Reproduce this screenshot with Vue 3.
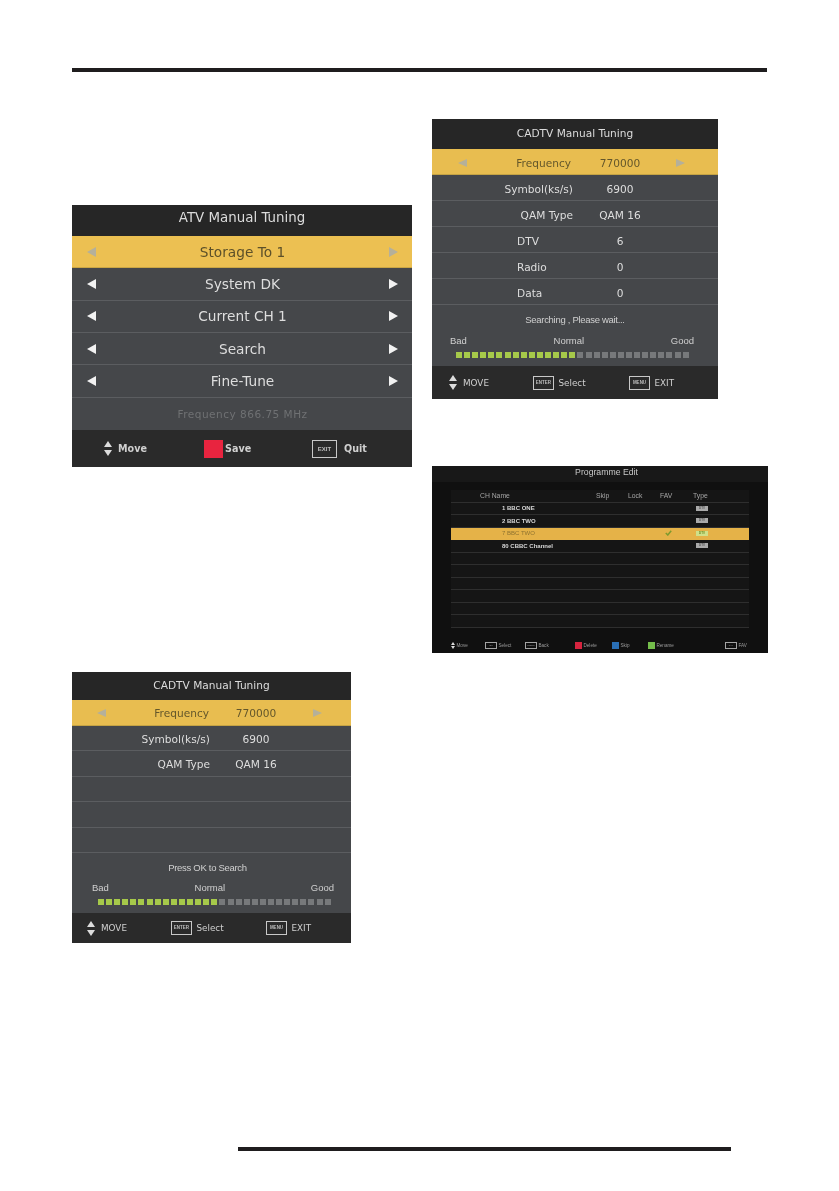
<script setup>
const atvRows = ['System DK', 'Current CH 1', 'Search', 'Fine-Tune']

const tuningPanels = [
  {
    id: 'cad-a',
    message: 'Searching , Please wait...',
    rows: [
      { label: 'Symbol(ks/s)', value: '6900' },
      { label: 'QAM Type', value: 'QAM 16' },
      { label: 'DTV', value: '6', left: true },
      { label: 'Radio', value: '0', left: true },
      { label: 'Data', value: '0', left: true }
    ]
  },
  {
    id: 'cad-b',
    message: 'Press OK to Search',
    rows: [
      { label: 'Symbol(ks/s)', value: '6900' },
      { label: 'QAM Type', value: 'QAM 16' },
      { label: '', value: '' },
      { label: '', value: '' },
      { label: '', value: '' }
    ]
  }
]

const segments = Array.from({ length: 29 }, (_, i) => i < 15)

const channels = [
  { name: '1 BBC ONE' },
  { name: '2 BBC TWO' },
  { name: '7 BBC TWO', active: true },
  { name: '80 CBBC Channel' },
  {}, {}, {}, {}, {}, {}
]
</script>

<template>
  <div class="page">
    <div class="rule-top"></div>

    <div class="columns">
      <div class="col col-left">
        <section class="panel atv">
          <h2 class="title">ATV Manual Tuning</h2>
          <div class="rows">
            <div class="atv-row selected">
              <i class="tri left"></i><span>Storage To 1</span><i class="tri right"></i>
            </div>
            <div v-for="r in atvRows" :key="r" class="atv-row">
              <i class="tri left"></i><span>{{ r }}</span><i class="tri right"></i>
            </div>
            <div class="atv-row dim"><span>Frequency 866.75 MHz</span></div>
          </div>
          <div class="foot">
            <div class="foot-item"><span class="updown"><i></i><i></i></span>Move</div>
            <div class="foot-item"><span class="red-key"></span>Save</div>
            <div class="foot-item"><span class="key">EXIT</span>Quit</div>
          </div>
        </section>

        <section class="panel tuning cad-b">
          <h2 class="title">CADTV Manual Tuning</h2>
          <div class="rows">
            <div class="t-row selected">
              <i class="tri left"></i>
              <span class="t-label">Frequency</span>
              <span class="t-value">770000</span>
              <i class="tri right"></i>
            </div>
            <div v-for="(r, i) in tuningPanels[1].rows" :key="i" class="t-row">
              <i class="tri none"></i>
              <span class="t-label">{{ r.label }}</span>
              <span class="t-value">{{ r.value }}</span>
            </div>
          </div>
          <div class="signal">
            <p class="message">{{ tuningPanels[1].message }}</p>
            <div class="levels"><span>Bad</span><span>Normal</span><span>Good</span></div>
            <div class="bar">
              <i v-for="(on, i) in segments" :key="i" :class="{ on }"></i>
            </div>
          </div>
          <div class="foot">
            <div class="foot-item"><span class="updown"><i></i><i></i></span>MOVE</div>
            <div class="foot-item"><span class="key">ENTER</span>Select</div>
            <div class="foot-item"><span class="key">MENU</span>EXIT</div>
          </div>
        </section>
      </div>

      <div class="col col-right">
        <section class="panel tuning cad-a">
          <h2 class="title">CADTV Manual Tuning</h2>
          <div class="rows">
            <div class="t-row selected">
              <i class="tri left"></i>
              <span class="t-label">Frequency</span>
              <span class="t-value">770000</span>
              <i class="tri right"></i>
            </div>
            <div v-for="(r, i) in tuningPanels[0].rows" :key="i" class="t-row">
              <i class="tri none"></i>
              <span class="t-label" :class="{ 'is-left': r.left }">{{ r.label }}</span>
              <span class="t-value">{{ r.value }}</span>
            </div>
          </div>
          <div class="signal">
            <p class="message">{{ tuningPanels[0].message }}</p>
            <div class="levels"><span>Bad</span><span>Normal</span><span>Good</span></div>
            <div class="bar">
              <i v-for="(on, i) in segments" :key="i" :class="{ on }"></i>
            </div>
          </div>
          <div class="foot">
            <div class="foot-item"><span class="updown"><i></i><i></i></span>MOVE</div>
            <div class="foot-item"><span class="key">ENTER</span>Select</div>
            <div class="foot-item"><span class="key">MENU</span>EXIT</div>
          </div>
        </section>

        <section class="panel prog">
          <h2 class="prog-title">Programme Edit</h2>
          <div class="table">
            <div class="tr head">
              <span class="ch head-ch">CH Name</span>
              <span>Skip</span><span>Lock</span><span>FAV</span><span>Type</span>
            </div>
            <div v-for="(c, i) in channels" :key="i" class="tr" :class="{ active: c.active }">
              <span class="ch">{{ c.name }}</span>
              <span></span><span></span>
              <span class="check">
                <svg v-if="c.active" width="7" height="6" viewBox="0 0 7 6"><path d="M.8 3l2 2L6.2.8" fill="none" stroke="#7d9a2e" stroke-width="1.5"/></svg>
              </span>
              <span><b v-if="c.name" class="badge">DTV</b></span>
            </div>
          </div>
          <div class="prog-foot">
            <div class="pf pf-move"><span class="updown tiny"><i></i><i></i></span>Move</div>
            <div class="pf pf-select"><span class="mini-key">OK</span>Select</div>
            <div class="pf pf-back"><span class="mini-key">MENU</span>Back</div>
            <div class="pf pf-del"><span class="swatch red"></span>Delete</div>
            <div class="pf pf-skip"><span class="swatch blue"></span>Skip</div>
            <div class="pf pf-ren"><span class="swatch green"></span>Rename</div>
            <div class="pf pf-fav"><span class="mini-key">FAV</span>FAV</div>
          </div>
        </section>
      </div>
    </div>

    <div class="rule-bottom"></div>
  </div>
</template>

<style>
body { background: #fff; }
</style>

<style scoped>
.page {
  width: 839px;
  height: 1191px;
  padding-top: 68px;
  box-sizing: border-box;
  background: #fff;
  overflow: hidden;
  font-family: "DejaVu Sans", sans-serif;
}
.rule-top {
  width: 695px;
  height: 4px;
  margin-left: 72px;
  background: #1f1d1e;
}
.rule-bottom {
  width: 493px;
  height: 4px;
  margin-left: 238px;
  background: #1f1d1e;
}
.columns {
  height: 1075px;
  display: grid;
  grid-template-columns: 360px 336px;
  padding-left: 72px;
}
.col { display: flex; flex-direction: column; align-items: flex-start; }
.col-left { padding-top: 133px; gap: 205px; }
.col-right { padding-top: 47px; gap: 67px; }

.panel {
  display: flex;
  flex-direction: column;
  background: #45474a;
  color: #dedede;
  filter: blur(0.45px);
}
.title {
  margin: 0;
  background: #262626;
  font-weight: 400;
  text-align: center;
  color: #dcdcdc;
}
.rows { display: grid; grid-auto-rows: 1fr; }

/* ATV */
.atv { width: 340px; height: 262px; }
.atv .title { height: 31px; line-height: 25px; font-size: 13.4px; }
.atv .rows { height: 194px; }
.atv-row {
  display: flex;
  align-items: center;
  justify-content: space-between;
  padding: 0 14px 0 15px;
  border-bottom: 1px solid #5b5d60;
  font-size: 13.7px;
}
.atv-row.selected { background: #ecc052; color: #5c5029; border-bottom-color: #cba644; }
.atv-row.dim { justify-content: center; color: #6f7173; font-size: 10.5px; letter-spacing: .5px; border-bottom: 0; }
.atv .foot {
  height: 37px;
  grid-template-columns: 100px 108px 1fr;
  padding-left: 32px;
}

.tri { display: block; width: 0; height: 0; border-style: solid; border-color: transparent; }
.tri.left { border-width: 5px 9px 5px 0; border-right-color: #f2f2f2; }
.tri.right { border-width: 5px 0 5px 9px; border-left-color: #f2f2f2; }
.selected .tri.left { border-right-color: #b5b09a; }
.selected .tri.right { border-left-color: #b5b09a; }

/* CADTV */
.tuning .title { line-height: 29px; font-size: 10.6px; }
.t-row {
  display: flex;
  align-items: center;
  padding-top: 2px;
  box-sizing: border-box;
  border-bottom: 1px solid #5b5d60;
  font-size: 10.6px;
}
.t-row.selected { background: #e8bd50; color: #64572b; border-bottom-color: #c5a344; }
.t-row .tri.left, .t-row .tri.right { border-top-width: 4px; border-bottom-width: 4px; }
.t-row .tri { flex: none; }
.t-row .tri.none { width: 9px; border: 0; }
.t-label { text-align: right; }
.t-label.is-left { text-align: left; padding-left: 48px; box-sizing: border-box; }
.t-value { text-align: center; }

.cad-a { width: 286px; height: 280px; }
.cad-a .title { height: 30px; }
.cad-a .rows { height: 156px; }
.cad-a .t-row { padding-left: 26px; }
.cad-a .t-label { width: 104px; }
.cad-a .t-row:not(.selected) .t-label { margin-left: 2px; margin-right: -2px; }
.cad-a .t-value { width: 74px; margin-left: 12px; }
.cad-a .t-row .tri.right { margin-left: 19px; }
.cad-a .foot { height: 33px; grid-template-columns: 84px 96px 1fr; padding-left: 17px; }
.cad-a .signal { height: 61px; padding: 8px 24px 0 18px; }
.cad-a .message { margin-left: 6px; }
.cad-a .levels { margin-top: 8px; }
.cad-a .bar { margin-left: 6px; }

.cad-b { width: 279px; height: 271px; }
.cad-b .title { height: 28px; line-height: 27px; }
.cad-b .rows { height: 153px; }
.cad-b .t-row { padding-left: 25px; }
.cad-b .t-label { width: 103px; }
.cad-b .t-row:not(.selected) .t-label { margin-left: 1px; margin-right: -1px; }
.cad-b .t-value { width: 74px; margin-left: 10px; }
.cad-b .t-row .tri.right { margin-left: 20px; }
.cad-b .foot { height: 30px; grid-template-columns: 84px 95px 1fr; padding-left: 15px; }
.cad-b .signal { height: 60px; padding: 8px 17px 0 20px; }
.cad-b .message { margin-right: 11px; }
.cad-b .levels { margin-top: 7px; }
.cad-b .bar { margin-left: 6px; }

.signal { box-sizing: border-box; font-family: "Liberation Sans", sans-serif; }
.message {
  margin: 0;
  text-align: center;
  font-size: 9.5px;
  line-height: 14px;
  letter-spacing: -.3px;
  color: #d0d0d0;
}
.levels {
  display: flex;
  justify-content: space-between;
  margin-top: 6px;
  font-size: 9.5px;
  line-height: 12px;
  color: #d0d0d0;
}
.bar { display: flex; gap: 2.1px; margin-top: 5px; }
.bar i { width: 6px; height: 6px; background: #77797b; }
.bar i.on { background: #a6c94a; }

.foot {
  display: grid;
  align-items: center;
  background: #2a2a2a;
  font-size: 8.8px;
  color: #d0d0d0;
}
.atv .foot { font-size: 9.6px; font-weight: 700; }
.foot-item { display: flex; align-items: center; gap: 6px; }
.updown { display: flex; flex-direction: column; gap: 3px; }
.updown i {
  display: block;
  width: 0;
  height: 0;
  border-left: 4px solid transparent;
  border-right: 4px solid transparent;
  border-bottom: 6px solid #dcdcdc;
}
.updown i + i { border-bottom: 0; border-top: 6px solid #dcdcdc; }
.updown.tiny { gap: 1px; }
.updown.tiny i { border-left-width: 2px; border-right-width: 2px; border-bottom-width: 3px; }
.updown.tiny i + i { border-bottom-width: 0; border-top-width: 3px; }
.red-key { width: 19px; height: 18px; background: #e8243f; margin-right: -4px; }
.key {
  box-sizing: border-box;
  width: 21px;
  height: 14px;
  margin-right: -1.5px;
  border: 1px solid #c8c8c8;
  text-align: center;
  font-size: 4.5px;
  line-height: 12px;
  font-weight: 700;
  font-family: "Liberation Sans", sans-serif;
  color: #bdbdbd;
}
.atv .key { width: 25px; height: 18px; line-height: 16px; font-size: 6px; margin-right: 1px; }

/* Programme edit */
.prog {
  width: 336px;
  height: 187px;
  background: #101010;
  font-family: "Liberation Sans", sans-serif;
}
.prog-title {
  margin: 0 0 8px;
  height: 16px;
  padding: 1px 0 0 13px;
  line-height: 10px;
  text-align: center;
  font-size: 8.7px;
  font-weight: 400;
  color: #c8c8c8;
  background: #181818;
  box-sizing: border-box;
}
.table {
  width: 298px;
  margin-left: 19px;
  height: 138px;
  background: #151515;
  display: grid;
  grid-auto-rows: 1fr;
}
.tr {
  display: grid;
  grid-template-columns: 145px 32px 32px 33px 1fr;
  align-items: center;
  border-bottom: 1px solid #2e2e2e;
  font-size: 6px;
  font-weight: 700;
  color: #d8d8d8;
  box-sizing: border-box;
  min-height: 0;
}
.tr .ch { padding-left: 51px; }
.tr.head { font-size: 6.8px; font-weight: 400; color: #a6a6a6; }
.tr .head-ch { padding-left: 29px; }
.tr.active { background: #e5b248; color: #8f7330; border-bottom-color: #e5b248; font-weight: 400; }
.check { display: flex; padding-left: 5px; }
.badge {
  display: block;
  width: 12px;
  height: 5px;
  margin-left: 3px;
  background: #a9a9a9;
  color: #555;
  font-size: 3px;
  line-height: 5px;
  text-align: center;
}
.tr.active .badge { background: #cfe08a; color: #6a8a20; }
.prog-foot {
  display: flex;
  align-items: center;
  height: 25px;
  padding: 9px 0 0 19px;
  box-sizing: border-box;
  font-size: 4.6px;
  color: #9c9c9c;
}
.pf { display: flex; align-items: center; gap: 1.5px; }
.pf-move { width: 34px; }
.pf-select { width: 40px; }
.pf-back { width: 50px; }
.pf-del { width: 37px; }
.pf-skip { width: 36px; }
.pf-ren { width: 77px; }
.mini-key {
  box-sizing: border-box;
  width: 12px;
  height: 7px;
  border: 1px solid #a4a4a4;
  font-size: 2.5px;
  line-height: 5px;
  text-align: center;
}
.swatch { width: 7px; height: 7px; }
.swatch.red { background: #d6243f; }
.swatch.blue { background: #2a6fb5; }
.swatch.green { background: #74bd4b; }
</style>
